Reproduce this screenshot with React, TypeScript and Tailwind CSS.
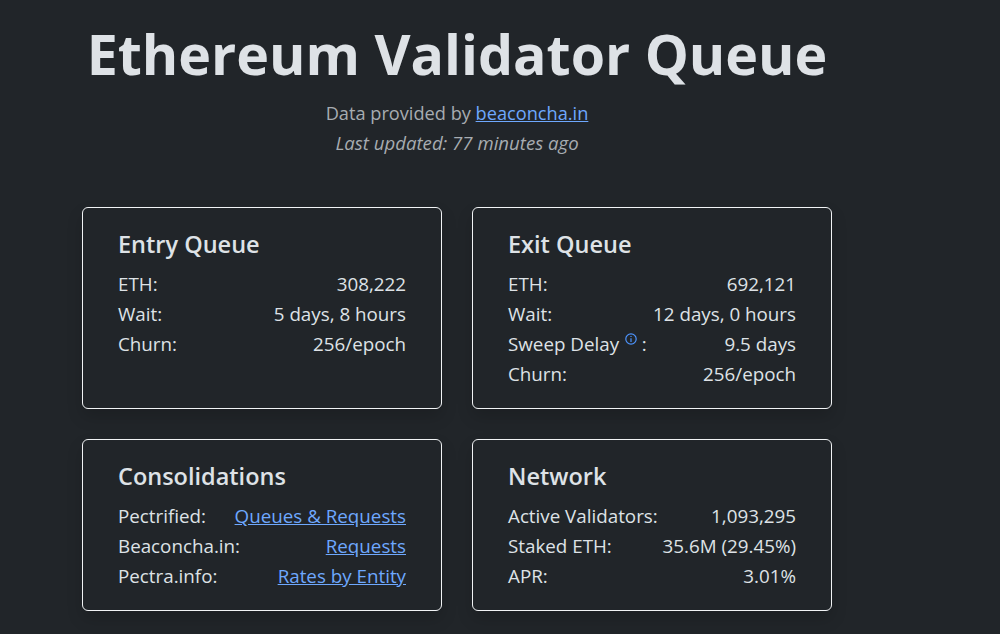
import React from "react";

const Row = ({ label, value }: { label: React.ReactNode; value: React.ReactNode }) => (
  <div className="flex justify-between leading-[30px] h-[30px]">
    <span>{label}</span>
    <span>{value}</span>
  </div>
);

const A = ({ children }: { children: React.ReactNode }) => (
  <a href="#" className="text-[#6ea8fe] underline">{children}</a>
);

const Info = () => (
  <svg viewBox="0 0 12 12" fill="none" stroke="currentColor" className="inline-block w-[12px] h-[12px] align-[6px] ml-[1px] text-[#4d94fd]">
    <circle cx="6" cy="6" r="5.2" strokeWidth="1.2" />
    <path d="M6 5.2V9" strokeWidth="1.2" />
    <path d="M6 3V4" strokeWidth="1.2" />
  </svg>
);

const Card = ({ title, children }: { title: string; children: React.ReactNode }) => (
  <div className="w-[360px] rounded-[6px] border border-[#f1f3f5] bg-[#212529] px-[35px] pt-[19px] pb-[19px] shadow-[0_8px_16px_rgba(0,0,0,0.15)]">
    <h2 className="text-[23.5px] leading-[36px] font-semibold text-[#dee2e6] mb-[6px] -mt-[1px] pb-[1px]">{title}</h2>
    {children}
  </div>
);

export default function App() {
  return (
    <div className="w-[1000px] h-[634px] overflow-hidden bg-[#212529] text-[#dee2e6] text-[18.8px] font-['Open_Sans',sans-serif]">
      <div className="w-[750px] ml-[82px] flex flex-col items-center">
        <h1 className="text-[55.5px] leading-[60px] font-bold mt-[24px] text-[#dee2e6] whitespace-nowrap">Ethereum Validator Queue</h1>
        <p className="text-[#a7acb1] text-[18.2px] leading-[30px] mt-[14px]">Data provided by <A>beaconcha.in</A></p>
        <p className="text-[#a7acb1] text-[18.6px] italic leading-[30px]">Last updated: 77 minutes ago</p>
        <div className="grid grid-cols-[360px_360px] gap-[30px] mt-[49px]">
          <Card title="Entry Queue">
            <Row label="ETH:" value="308,222" />
            <Row label="Wait:" value="5 days, 8 hours" />
            <Row label="Churn:" value="256/epoch" />
          </Card>
          <Card title="Exit Queue">
            <Row label="ETH:" value="692,121" />
            <Row label="Wait:" value="12 days, 0 hours" />
            <Row label={<span>Sweep Delay <Info /> :</span>} value="9.5 days" />
            <Row label="Churn:" value="256/epoch" />
          </Card>
          <Card title="Consolidations">
            <Row label="Pectrified:" value={<A>Queues &amp; Requests</A>} />
            <Row label="Beaconcha.in:" value={<A>Requests</A>} />
            <Row label="Pectra.info:" value={<A>Rates by Entity</A>} />
          </Card>
          <Card title="Network">
            <Row label="Active Validators:" value="1,093,295" />
            <Row label="Staked ETH:" value="35.6M (29.45%)" />
            <Row label="APR:" value="3.01%" />
          </Card>
        </div>
      </div>
    </div>
  );
}
